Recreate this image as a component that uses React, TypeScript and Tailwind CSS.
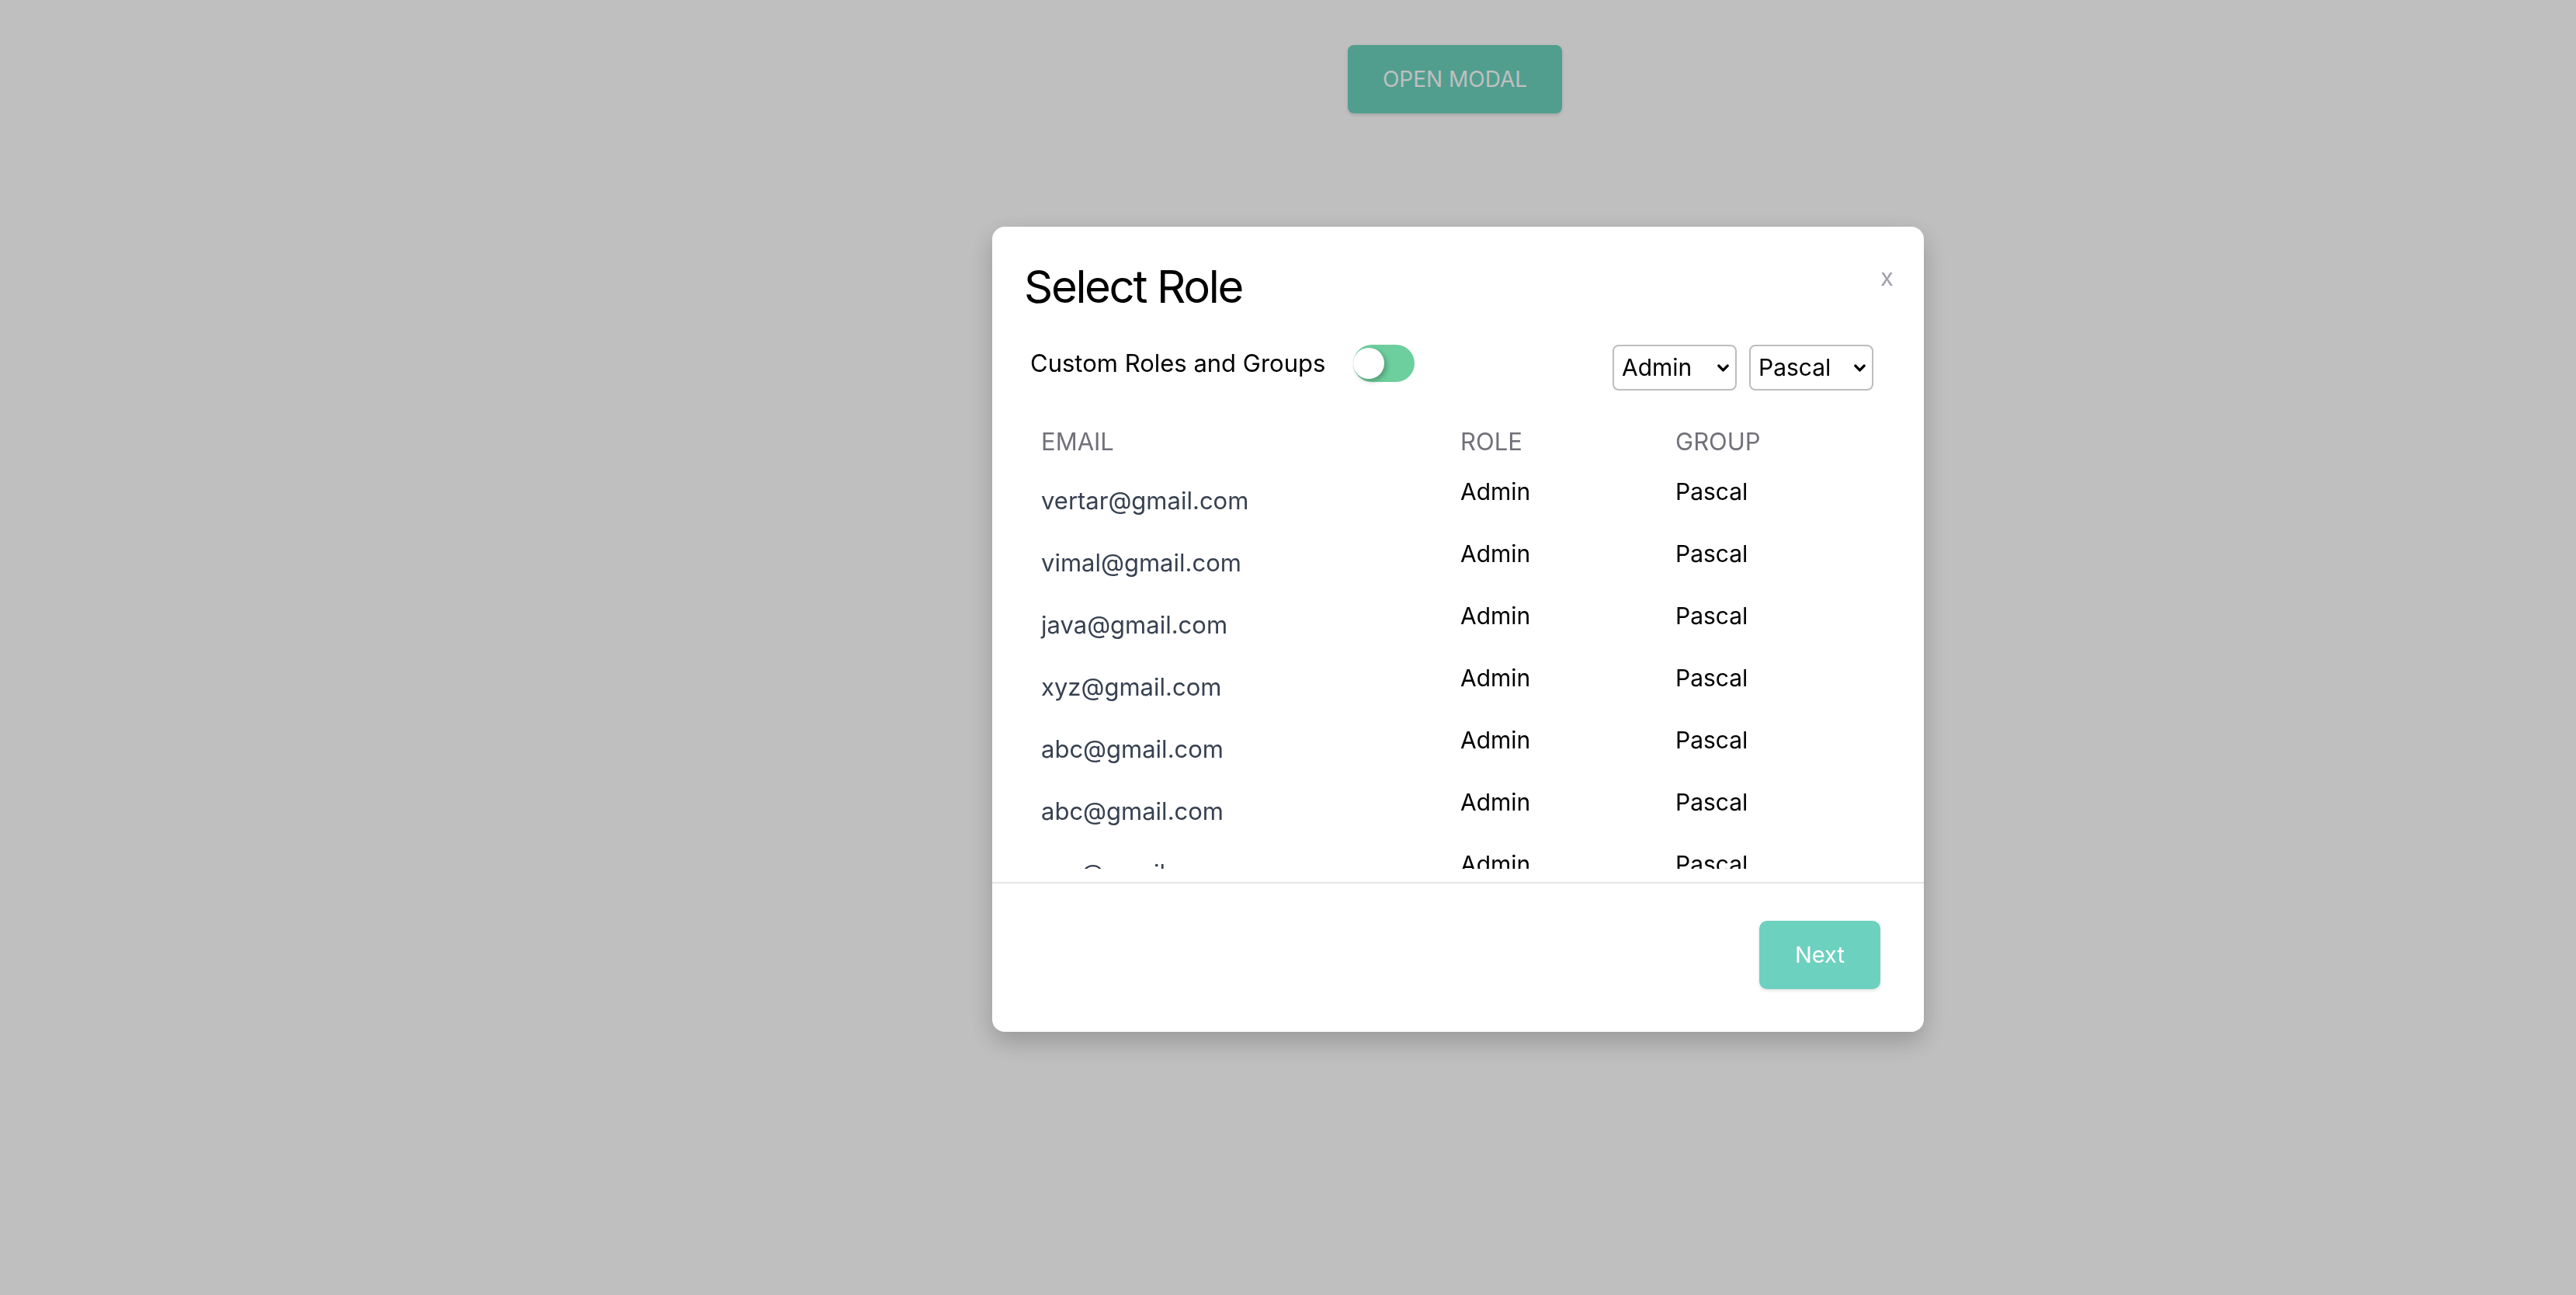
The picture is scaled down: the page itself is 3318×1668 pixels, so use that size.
import React, { useState } from 'react';

const USERS = [
  'vertar@gmail.com',
  'vimal@gmail.com',
  'java@gmail.com',
  'xyz@gmail.com',
  'abc@gmail.com',
  'abc@gmail.com',
  'xyz@gmail.com',
  'java@gmail.com',
];

const Chevron = () => (
  <svg
    viewBox="0 0 18 12"
    className="pointer-events-none absolute right-[9px] top-1/2 h-[12px] w-[17px] -translate-y-1/2"
    fill="none"
    stroke="#000"
    strokeWidth={3.6}
    strokeLinecap="round"
    strokeLinejoin="round"
  >
    <path d="M3 3l6 6 6-6" />
  </svg>
);

const Picker = ({ value, options }: { value: string; options: string[] }) => (
  <div className="relative">
    <select
      defaultValue={value}
      className="h-[59px] w-[160px] appearance-none rounded-[8px] border-[2px] border-[#bdbdbd] bg-white pl-[10px] text-[30px] text-black outline-none"
    >
      {options.map(o => (
        <option key={o}>{o}</option>
      ))}
    </select>
    <Chevron />
  </div>
);

export default function App() {
  const [custom, setCustom] = useState(false);

  return (
    <div className="min-h-screen bg-white font-['Inter','Liberation_Sans',sans-serif]">
      <div className="flex justify-center pl-[430px] pt-[58px]">
        <button className="h-[88px] w-[276px] rounded-[8px] bg-[#6cd3be] text-[28px] text-white shadow-[0_2px_4px_rgba(0,0,0,0.15)]">
          OPEN MODAL
        </button>
      </div>

      {/* overlay */}
      <div className="fixed inset-0 flex items-start justify-center bg-black/25 pl-[438px] pt-[292px]">
        <div className="flex h-[1037px] w-[1200px] flex-col rounded-[16px] bg-white shadow-[0_12px_32px_rgba(0,0,0,0.22)]">
          <div className="flex items-start justify-between pl-[41px] pr-[39px] pt-[42px]">
            <h2 className="text-[58px] leading-[70px] tracking-[-0.04em] text-black">Select Role</h2>
            <button className="mt-[7px] text-[31px] leading-[32px] text-[#a1a1aa]">x</button>
          </div>

          <div className="mt-[40px] flex items-start justify-between pl-[49px] pr-[65px]">
            <div className="flex h-[48px] items-center">
              <span className="text-[31px] text-black">Custom Roles and Groups</span>
              <button
                onClick={() => setCustom(!custom)}
                className="ml-[36px] flex h-[48px] w-[79px] items-center rounded-full bg-[#6dcf9d]"
              >
                <span className="h-[40px] w-[40px] rounded-full bg-white shadow-[3px_3px_6px_rgba(0,0,0,0.25)]" />
              </button>
            </div>
            <div className="flex gap-[16px]">
              <Picker value="Admin" options={['Admin', 'User']} />
              <Picker value="Pascal" options={['Pascal', 'Java']} />
            </div>
          </div>

          <div className="mt-[25px] h-[591px] overflow-y-auto pl-[63px] [scrollbar-width:none]">
            <div className="grid h-[81px] grid-cols-[540px_277px_1fr] items-center text-[31px] leading-[40px] text-[#71717a]">
              <span>EMAIL</span>
              <span>ROLE</span>
              <span>GROUP</span>
            </div>
            {USERS.map((email, i) => (
              <div key={i} className="grid h-[80px] grid-cols-[540px_277px_1fr] items-start text-[30px] leading-[48px] text-black">
                <span className="pt-[12px] text-[31px] text-[#374151]">{email}</span>
                <span>Admin</span>
                <span>Pascal</span>
              </div>
            ))}
          </div>

          <div className="mt-[17px] h-[2px] bg-[#e4e4e7]" />

          <div className="flex justify-end pr-[56px] pt-[48px]">
            <button className="h-[88px] w-[156px] rounded-[10px] bg-[#6dd1bf] text-[29px] text-white shadow-[0_2px_4px_rgba(0,0,0,0.12)]">
              Next
            </button>
          </div>
        </div>
      </div>
    </div>
  );
}
